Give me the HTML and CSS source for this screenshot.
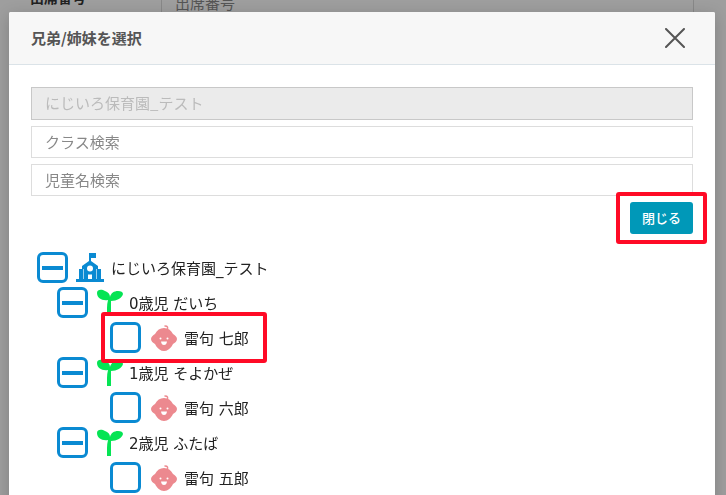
FILE: index.html
```html
<!DOCTYPE html>
<html lang="ja">
<head>
    <meta charset="utf-8" />
    <title>兄弟/姉妹を選択</title>
    <link rel="stylesheet" href="styles.css">
</head>
<body>
    <!-- icons used in the tree -->
    <svg class="sprite" width="0" height="0">
        <symbol id="school" viewBox="0 0 28 30">
            <path fill="#0a8ad2" fill-rule="evenodd" d="M13 0H20V5H15V8L22 13V16H25V26H28V29H0V26H3V16H6V13L13 8zM14 12.500a3 3 0 1 0 0 6a3 3 0 1 0 0-6zM12 21.500V26H16V21.500z" />
            <path fill="none" stroke="#fff" stroke-width="1" opacity="0.6" d="M7.500 16V26M20.500 16V26" />
        </symbol>
        <symbol id="sprout" viewBox="0 0 26 28">
            <path fill="#05e454" d="M0 4C0 0 5 0 8 2C11 3 13 5 13 8C14 4 17 2 21 2C24 2 26 3 26 5C25 9 20 12 14 12V27H10V19Q10 15 11 11C5 12 0 9 0 4z" />
        </symbol>
        <symbol id="baby" viewBox="0 0 26 26">
            <path fill="#ec898f" d="M13 3C17 3 20 5 22 9C24 10 26 12 26 14C26 16 24 18 22 19C20 23 17 26 13 26C9 26 6 23 4 19C2 18 0 16 0 14C0 12 2 10 4 9C6 5 9 3 13 3z" />
            <path fill="none" stroke="#ec898f" stroke-width="1.500" stroke-linecap="round" d="M14 1Q18 1 16 5" />
            <path fill="#fff" d="M10 16.500H16Q15.500 20 13 20Q10.500 20 10 16.500z" />
            <circle fill="#fff" cx="9.500" cy="13.500" r="1" />
            <circle fill="#fff" cx="16.500" cy="13.500" r="1" />
        </symbol>
    </svg>

    <div class="page">
        <div class="page-label">出席番号</div>
        <div class="page-field">出席番号</div>
    </div>

    <div class="overlay">
        <div class="modal" role="dialog" aria-labelledby="modalTitle">
            <div class="modal-header">
                <h1 id="modalTitle" class="modal-title">兄弟/姉妹を選択</h1>
                <button class="modal-close" type="button" aria-label="閉じる">
                    <svg width="20" height="20" viewBox="0 0 20 20"><path d="M1 1L19 19M19 1L1 19" fill="none" stroke="#555" stroke-width="2" stroke-linecap="round" /></svg>
                </button>
            </div>
            <form class="modal-body">
                <input class="field" type="text" value="にじいろ保育園_テスト" aria-label="園名" disabled />
                <input class="field" type="text" placeholder="クラス検索" aria-label="クラス検索" />
                <input class="field" type="text" placeholder="児童名検索" aria-label="児童名検索" />
                <div class="actions">
                    <span class="marked marked-button"><button class="close-button" type="button">閉じる</button></span>
                </div>

                <ul class="tree">
                    <li>
                        <label class="row"><input class="box minus" type="checkbox" /><svg class="icon school"><use href="#school" /></svg>にじいろ保育園_テスト</label>
                        <ul class="classes">
                            <li>
                                <label class="row"><input class="box minus" type="checkbox" /><svg class="icon sprout"><use href="#sprout" /></svg>0歳児 だいち</label>
                                <ul class="children">
                                    <li><label class="row marked marked-row"><input class="box" type="checkbox" /><svg class="icon baby"><use href="#baby" /></svg>雷句 七郎</label></li>
                                </ul>
                            </li>
                            <li>
                                <label class="row"><input class="box minus" type="checkbox" /><svg class="icon sprout"><use href="#sprout" /></svg>1歳児 そよかぜ</label>
                                <ul class="children">
                                    <li><label class="row"><input class="box" type="checkbox" /><svg class="icon baby"><use href="#baby" /></svg>雷句 六郎</label></li>
                                </ul>
                            </li>
                            <li>
                                <label class="row"><input class="box minus" type="checkbox" /><svg class="icon sprout"><use href="#sprout" /></svg>2歳児 ふたば</label>
                                <ul class="children">
                                    <li><label class="row"><input class="box" type="checkbox" /><svg class="icon baby"><use href="#baby" /></svg>雷句 五郎</label></li>
                                </ul>
                            </li>
                        </ul>
                    </li>
                </ul>
            </form>
        </div>
    </div>
</body>
</html>
```

FILE: styles.css
```css
* {
    box-sizing: border-box;
    font-family: "Noto Sans CJK JP", sans-serif;
}

body {
    margin: 0;
    overflow: hidden;
    background-color: #9e9e9e;
    color: #222;
    font-size: 15px;
}

.sprite {
    position: absolute;
}

/* page behind the modal */
.page {
    display: flex;
    margin-top: -10px;
    padding: 0 32px 0 30px;
}

.page-label {
    width: 131px;
    font-size: 14px;
    font-weight: bold;
    line-height: 14px;
}

.page-field {
    flex: 1;
    height: 34px;
    padding-left: 13px;
    border: 1px solid #888;
    color: #555;
    line-height: 24px;
}

.overlay {
    position: fixed;
    inset: 0;
    padding: 12px 11px 0 9px;
    overflow: hidden;
}

/* modal */
.modal {
    min-height: 100%;
    background-color: #fff;
    border-radius: 2px;
    box-shadow: 0 4px 16px rgba(0, 0, 0, 0.2);
}

.modal-header {
    display: flex;
    align-items: center;
    justify-content: space-between;
    height: 53px;
    padding: 0 30px 0 22px;
    background-color: #f7f7f7;
    border-bottom: 1px solid #dbe3e8;
    border-radius: 2px 2px 0 0;
}

.modal-title {
    margin: 0;
    color: #555;
    font-size: 15px;
    font-weight: bold;
    line-height: 24px;
}

.modal-close {
    padding: 0;
    border: 0;
    background: none;
    line-height: 0;
}

.modal-body {
    display: flex;
    flex-direction: column;
    gap: 6px;
    padding: 22px;
}

.field {
    width: 100%;
    height: 32px;
    padding: 0 13px 2px;
    border: 1px solid #ddd;
    color: #333;
    font-size: 15px;
}

    .field::placeholder {
        color: #888;
    }

    .field:disabled {
        height: 33px;
        background-color: #ebebeb;
        border-color: #c8c8c8;
        color: #bbb;
    }

.actions {
    display: flex;
    justify-content: flex-end;
}

.close-button {
    height: 32px;
    padding: 0 12px 2px;
    border: 0;
    border-radius: 3px;
    background-color: #0098b8;
    color: #fff;
    font-size: 13px;
    font-weight: 500;
}

/* red frame around the parts to click */
.marked {
    position: relative;
}

    .marked::after {
        content: "";
        position: absolute;
        z-index: 1;
        border: 4px solid #ff0a26;
        border-radius: 3px;
        pointer-events: none;
    }

.marked-button::after {
    inset: -10px -14px;
}

.marked-row::after {
    inset: -8px -18px -8px -9px;
}

/* tree */
.tree, .classes, .children {
    margin: 0;
    padding: 0;
    list-style: none;
}

.tree {
    padding: 10px 0 0 6px;
}

.classes {
    padding-left: 20px;
}

.children {
    padding-left: 53px;
}

.row {
    display: flex;
    align-items: center;
    width: max-content;
    height: 35px;
    font-family: "DejaVu Sans", "Noto Sans CJK JP", sans-serif;
}

.box {
    appearance: none;
    display: grid;
    place-content: center;
    width: 31px;
    height: 31px;
    margin: 0;
    border: 3px solid #0a8ad2;
    border-radius: 6px;
    background-color: #fff;
}

.minus::before {
    content: "";
    width: 21px;
    height: 4px;
    background-color: #0a8ad2;
}

.icon {
    flex: none;
}

.school {
    width: 28px;
    height: 30px;
    margin: 0 7px 0 8px;
}

.sprout {
    width: 26px;
    height: 28px;
    margin: 0 6px 0 9px;
}

.baby {
    width: 26px;
    height: 26px;
    margin: 0 7px 0 10px;
}
```
